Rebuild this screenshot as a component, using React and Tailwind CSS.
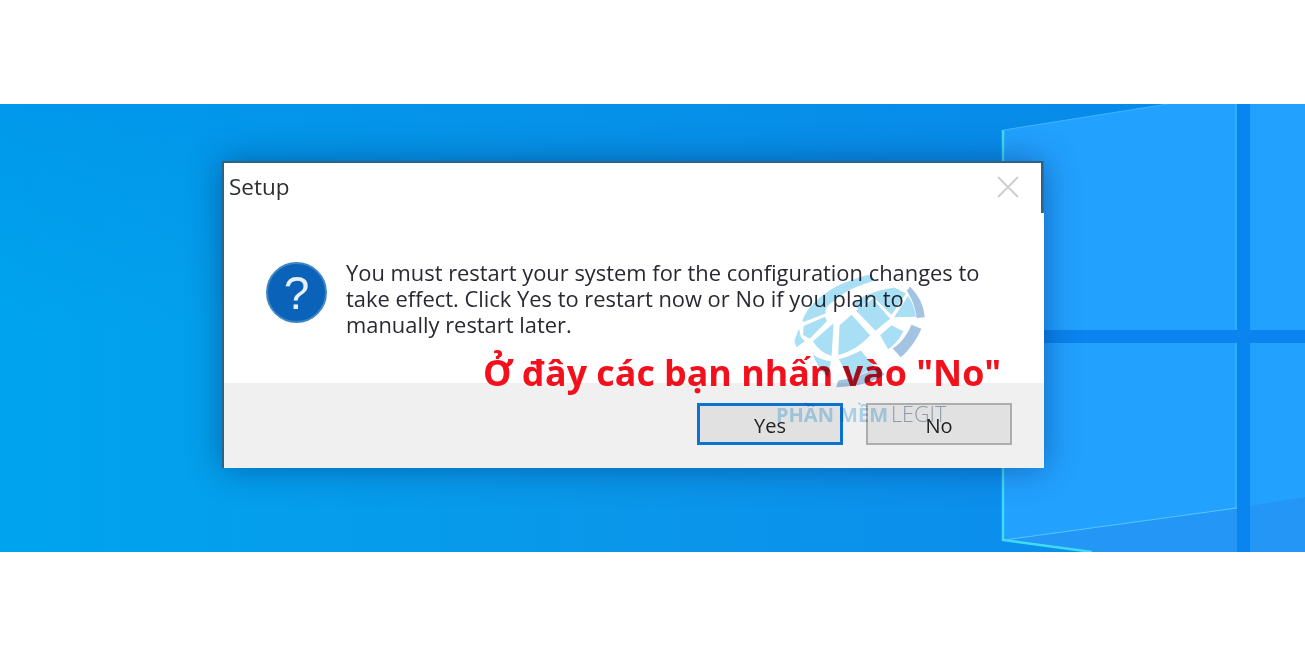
import React from "react";

const uiFont = "font-['Open_Sans','Noto_Sans',sans-serif]";

const DesktopWindow = () => (
  <svg className="absolute inset-0 h-full w-full" viewBox="0 0 1305 448" preserveAspectRatio="none">
    <path d="M1002 26 L1168 0 L1305 0 L1305 448 L1092 448 L1002 436 Z" fill="#22a1ff" />
    <path d="M1002 436 L1237 404 L1237 448 L1092 448 Z" fill="#2396f6" />
    <path d="M1250 402 L1305 393 L1305 448 L1250 448 Z" fill="#2396f6" />
    <rect x="1237" y="0" width="13" height="448" fill="#0a84ee" />
    <rect x="1002" y="226" width="303" height="13" fill="#0a84ee" />
    <path d="M1003 26 L1003 436 L1092 448" fill="none" stroke="#3fdcf0" strokeWidth="2.5" />
    <path d="M1004 26 L1168 0" fill="none" stroke="#3fb4fb" strokeWidth="1" />
    <path d="M1004 436 L1237 404" fill="none" stroke="#58c6fb" strokeWidth="1" />
    <path d="M1236 0 L1236 226 M1236 239 L1236 404" fill="none" stroke="#39c4f6" strokeWidth="1" />
  </svg>
);

const QuestionIcon = () => (
  <div className="flex h-[61px] w-[61px] shrink-0 items-center justify-center rounded-full border-2 border-[#3f86c6] bg-[#0a63b8]">
    <span className="font-['Liberation_Sans',sans-serif] text-[46px] leading-none font-medium text-[#e8f0f8]">?</span>
  </div>
);

// toa do lay theo anh zoom 3x cua logo
const Globe = () => (
  <svg width="133" height="120" viewBox="100 30 400 360">
    <g fill="#a8dff5">
      <path d="M128 182 C150 125 215 70 335 42 L345 62 C290 78 250 96 225 122 C205 132 195 148 198 160 L132 186 Z" />
      <path d="M280 132 C300 112 340 92 405 82 L440 100 L396 164 L338 108 L300 150 Z" />
      <path d="M132 198 L196 170 L202 184 L150 236 L130 224 Z" />
      <path d="M104 242 L118 206 L124 232 L136 244 L110 262 Z" />
      <path d="M160 244 L222 190 L216 288 C196 282 178 272 160 244 Z" />
      <path d="M240 196 L276 164 L332 226 C306 256 272 276 236 286 Z" />
      <path d="M290 152 L340 116 L392 176 L348 212 Z" />
      <path d="M404 172 L446 108 C458 124 466 146 470 170 Z" />
      <path d="M362 226 L396 196 L432 214 C420 238 406 254 386 268 Z" />
      <path d="M238 298 C262 292 286 282 304 272 L346 322 C320 338 292 350 268 356 Z" />
      <path d="M160 284 C178 296 194 302 214 304 L206 352 C190 342 172 316 160 284 Z" />
    </g>
    <g fill="#a3c3e2">
      <path d="M452 80 C478 106 494 136 496 172 L472 174 C468 142 458 116 442 92 Z" />
      <path d="M456 194 L486 206 C472 240 448 272 424 292 L400 266 C424 250 444 224 456 194 Z" />
      <path d="M356 320 L376 344 C340 368 296 380 230 382 L236 362 C282 356 322 342 356 320 Z" />
    </g>
  </svg>
);

const DialogButton = ({ label, focused }) => (
  <button
    className={
      focused
        ? "h-[42px] w-[146px] border-[3px] border-[#0b72d0] bg-[#e1e1e1] pt-1 text-[20px] text-[#222]"
        : "h-[42px] w-[146px] border-2 border-[#adadad] bg-[#e1e1e1] pt-1 text-[20px] text-[#222]"
    }
  >
    {label}
  </button>
);

export default function App() {
  return (
    <div className={`relative h-[656px] w-[1305px] overflow-hidden bg-white ${uiFont}`}>
      <div className="absolute mt-[104px] h-[448px] w-full bg-gradient-to-r from-[#00a4ee] via-[#0a96ea] to-[#0e88ee]">
        <div className="absolute inset-0 bg-gradient-to-b from-[#0088e6]/40 via-transparent to-transparent" />
        <DesktopWindow />
        <div className="relative pl-[222px] pt-[57px]">
          <div className="relative flex h-[307px] w-[822px] flex-col border-t-2 border-l-2 border-[#2f6384] bg-white shadow-[0_0_32px_rgba(0,30,90,0.45)] blur-[0.5px]">
            <div className="absolute -top-0.5 right-0 h-[52px] w-[3px] border-l-2 border-[#2f6384] bg-[#1b78c0]" />
            <div className="flex h-[48px] items-center justify-between pl-[5px] pr-[25px]">
              <span className="text-[22.5px] leading-none text-[#2e2e2e]">Setup</span>
              <svg width="22" height="22" viewBox="0 0 22 22" stroke="#cfcfcf" strokeWidth="2">
                <path d="M1 1 L21 21 M21 1 L1 21" />
              </svg>
            </div>
            <div className="flex gap-[19px] pl-[42px] pt-[51px]">
              <QuestionIcon />
              <p className="mt-[-2px] text-[21.9px] leading-[26px] font-medium whitespace-nowrap text-[#2a2833]">
                You must restart your system for the configuration changes to
                <br />
                take effect. Click Yes to restart now or No if you plan to
                <br />
                manually restart later.
              </p>
            </div>
            <div className="mt-auto flex h-[85px] items-center justify-end gap-[23px] bg-[#f0f0f0] pb-[3px] pr-[32px]">
              <DialogButton label="Yes" focused />
              <DialogButton label="No" />
            </div>
          </div>
        </div>
      </div>

      {/* chu do va watermark nam de len hop thoai */}
      <p className="absolute left-[483px] top-[347px] whitespace-nowrap text-[35.8px] leading-[50px] font-bold text-[#f2101c] blur-[0.3px]">
        Ở đây các bạn nhấn vào "No"
      </p>
      <div className="absolute left-[793px] top-[270px] mix-blend-multiply blur-[0.4px]">
        <Globe />
      </div>
      <div className="absolute left-[776px] top-[400px] flex items-baseline whitespace-nowrap text-[20px] leading-[28px] mix-blend-multiply">
        <span className="font-bold text-[#b3dcf4]">PHẦN MỀM</span>
        <span className="ml-[3px] text-[21.5px] font-light text-[#9fb2c4]">LEGIT</span>
      </div>
    </div>
  );
}
